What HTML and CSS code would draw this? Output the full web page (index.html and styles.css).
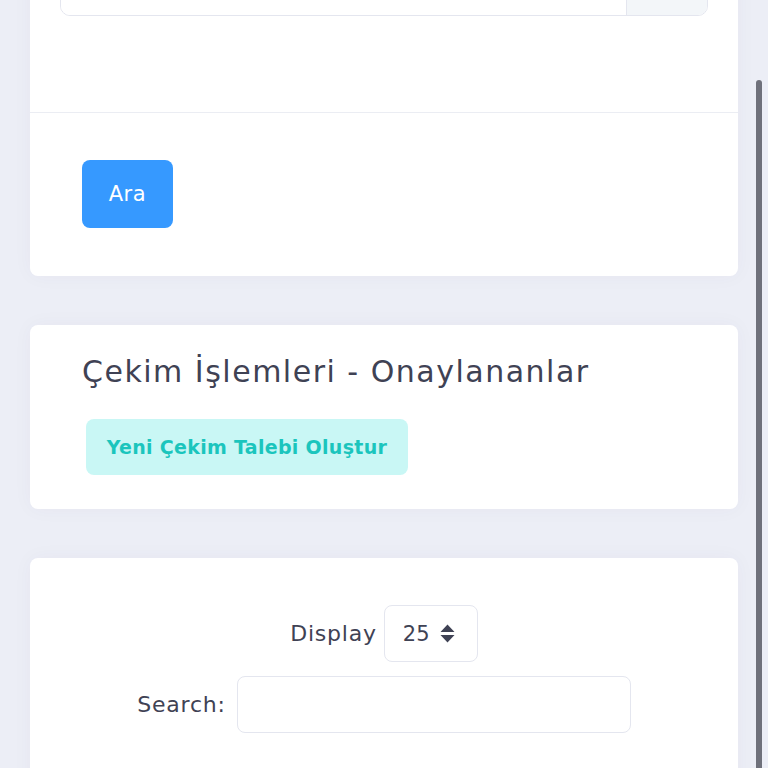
FILE: index.html
```html
<!DOCTYPE html>
<html lang="tr">
<head>
<meta charset="utf-8">
<link rel="stylesheet" href="styles.css">
</head>
<body>
<div class="page">
  <div class="card card-first">
    <div class="card-body form-body">
      <div class="input-group">
        <div class="ig-input"></div>
        <div class="ig-addon"></div>
      </div>
    </div>
    <div class="card-footer">
      <button class="btn btn-primary">Ara</button>
    </div>
  </div>

  <div class="card">
    <div class="card-body head-body">
      <h3 class="card-title">Çekim İşlemleri - Onaylananlar</h3>
      <button class="btn btn-light-success">Yeni Çekim Talebi Oluştur</button>
    </div>
  </div>

  <div class="card card-last">
    <div class="card-body table-body">
      <div class="row-ctl row-display">
        <label class="ctl-label">Display</label>
        <div class="select">
          <span>25</span>
          <svg class="sort" width="15" height="19" viewBox="0 0 15 19"><path d="M7.5 0.5 L14.5 8 H0.5 Z M0.5 11 H14.5 L7.5 18.5 Z" fill="#3f4254"/></svg>
        </div>
      </div>
      <div class="row-ctl row-search">
        <label class="ctl-label">Search:</label>
        <div class="search-input"></div>
      </div>
    </div>
  </div>
</div>
<div class="scroll-thumb"></div>
</body>
</html>
```
FILE: styles.css
```css
html, body {
  margin: 0;
  padding: 0;
  background: #eceef6;
  height: 768px;
  overflow: hidden;
  font-family: "DejaVu Sans", "Open Sans", sans-serif;
  color: #3f4254;
}
.page {
  padding: 0 30px;
  display: flex;
  flex-direction: column;
  gap: 49px;
}
.card {
  background: #ffffff;
  border-radius: 8px;
  box-shadow: 0 0 20px rgba(82, 63, 105, 0.04);
}
.card-first {
  margin-top: -42px;
  border-radius: 0 0 8px 8px;
}
.form-body {
  padding: 0 30px 96px;
}
.input-group {
  display: flex;
  height: 56px;
  border: 1px solid #e4e6ef;
  border-radius: 0 0 10px 10px;
  overflow: hidden;
}
.ig-input {
  flex: 1;
  background: #fff;
}
.ig-addon {
  width: 80px;
  background: #f3f6f9;
  border-left: 1px solid #e4e6ef;
}
.card-footer {
  border-top: 1px solid #ebedf3;
  padding: 47px 52px 48px;
}
.btn {
  border: none;
  font-family: inherit;
  border-radius: 8px;
  cursor: pointer;
  padding: 0;
}
.btn-primary {
  display: block;
  width: 91px;
  height: 68px;
  background: #3699ff;
  color: #fff;
  font-size: 21px;
  letter-spacing: 0.6px;
}
.head-body {
  padding: 26px 52px 34px;
}
.card-title {
  margin: 0 0 26px;
  font-size: 30px;
  font-weight: 400;
  color: #3f4254;
  line-height: 42px;
  letter-spacing: 1.5px;
}
.btn-light-success {
  display: block;
  margin-left: 4px;
  width: 322px;
  height: 56px;
  background: #c9f7f5;
  color: #1bc5bd;
  font-size: 19px;
  font-weight: 600;
  letter-spacing: 0.3px;
}
.table-body {
  padding: 47px 52px 60px;
  display: flex;
  flex-direction: column;
  align-items: center;
  gap: 14px;
}
.row-ctl {
  display: flex;
  align-items: center;
}
.row-display {
  gap: 7px;
}
.row-search {
  gap: 11px;
}
.ctl-label {
  font-size: 22px;
  color: #3f4254;
  letter-spacing: 0.8px;
}
.select {
  width: 94px;
  height: 57px;
  box-sizing: border-box;
  border: 1px solid #e4e6ef;
  border-radius: 8px;
  display: flex;
  align-items: center;
  padding-left: 18px;
  gap: 10px;
  font-size: 21px;
}
.sort {
  display: block;
}
.search-input {
  width: 394px;
  height: 57px;
  box-sizing: border-box;
  border: 1px solid #e4e6ef;
  border-radius: 8px;
}
.scroll-thumb {
  position: fixed;
  left: 756px;
  top: 80px;
  width: 6px;
  height: 720px;
  border-radius: 3px;
  background: #6f717b;
}
```
